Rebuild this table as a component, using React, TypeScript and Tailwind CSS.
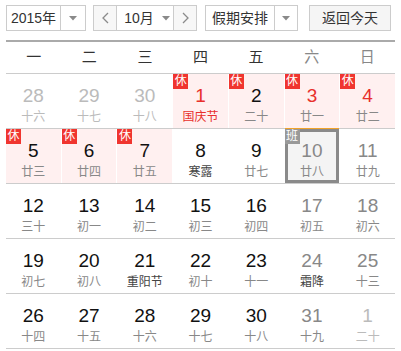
import React from "react";

type Day = {
  n: number;
  lunar: string;
  tone?: "prev" | "weekend" | "red" | "normal";
  lunarTone?: "red" | "dark" | "light" | "normal";
  rest?: boolean;
  work?: boolean;
  selected?: boolean;
};

const WEEK = ["一", "二", "三", "四", "五", "六", "日"];

const ROWS: Day[][] = [
  [
    { n: 28, lunar: "十六", tone: "prev", lunarTone: "light" },
    { n: 29, lunar: "十七", tone: "prev", lunarTone: "light" },
    { n: 30, lunar: "十八", tone: "prev", lunarTone: "light" },
    { n: 1, lunar: "国庆节", tone: "red", lunarTone: "red", rest: true },
    { n: 2, lunar: "二十", rest: true },
    { n: 3, lunar: "廿一", tone: "red", rest: true },
    { n: 4, lunar: "廿二", tone: "red", rest: true },
  ],
  [
    { n: 5, lunar: "廿三", rest: true },
    { n: 6, lunar: "廿四", rest: true },
    { n: 7, lunar: "廿五", rest: true },
    { n: 8, lunar: "寒露", lunarTone: "dark" },
    { n: 9, lunar: "廿七" },
    { n: 10, lunar: "廿八", tone: "weekend", work: true, selected: true },
    { n: 11, lunar: "廿九", tone: "weekend" },
  ],
  [
    { n: 12, lunar: "三十" },
    { n: 13, lunar: "初一" },
    { n: 14, lunar: "初二" },
    { n: 15, lunar: "初三" },
    { n: 16, lunar: "初四" },
    { n: 17, lunar: "初五", tone: "weekend" },
    { n: 18, lunar: "初六", tone: "weekend" },
  ],
  [
    { n: 19, lunar: "初七" },
    { n: 20, lunar: "初八" },
    { n: 21, lunar: "重阳节", lunarTone: "dark" },
    { n: 22, lunar: "初十" },
    { n: 23, lunar: "十一" },
    { n: 24, lunar: "霜降", tone: "weekend", lunarTone: "dark" },
    { n: 25, lunar: "十三", tone: "weekend" },
  ],
  [
    { n: 26, lunar: "十四" },
    { n: 27, lunar: "十五" },
    { n: 28, lunar: "十六" },
    { n: 29, lunar: "十七" },
    { n: 30, lunar: "十八" },
    { n: 31, lunar: "十九", tone: "weekend" },
    { n: 1, lunar: "二十", tone: "prev", lunarTone: "light" },
  ],
];

const numColor = {
  prev: "text-[#bbbbbb]",
  weekend: "text-[#888888]",
  red: "text-[#e8302c]",
  normal: "text-[#111111]",
};

const lunarColor = {
  red: "text-[#e8302c]",
  dark: "text-[#444444]",
  light: "text-[#bbbbbb]",
  normal: "text-[#888888]",
};

function Caret() {
  return (
    <svg width="8" height="5" viewBox="0 0 8 5">
      <path d="M0 0 L8 0 L4 4.5 Z" fill="#8a8a8a" />
    </svg>
  );
}

function Chevron({ dir }: { dir: "left" | "right" }) {
  return (
    <svg width="7" height="12" viewBox="0 0 7 12">
      <path
        d={dir === "left" ? "M6 1 L1 6 L6 11" : "M1 1 L6 6 L1 11"}
        fill="none"
        stroke="#8a8a8a"
        strokeWidth="1.3"
      />
    </svg>
  );
}

function Cell({ d }: { d: Day }) {
  return (
    <div
      className={`relative h-[54px] flex flex-col items-center ${
        d.rest ? "bg-[#fff0f0]" : ""
      }`}
    >
      {d.selected && (
        <div className="absolute inset-x-0 top-0 bottom-0 border-[3px] border-[#8a8a8a] bg-[#f4f4f4] shadow-[0_-1px_0_#f0a32a]" />
      )}
      {d.rest && (
        <span className="absolute left-0 top-0 w-[15px] h-[15px] bg-[#f0352f] text-white text-[12px] leading-[15px] text-center">
          休
        </span>
      )}
      {d.work && (
        <span className="absolute left-0 top-0 w-[15px] h-[15px] bg-[#999999] text-white text-[12px] leading-[15px] text-center z-10">
          班
        </span>
      )}
      <span
        className={`relative mt-[11px] text-[19px] leading-[22px] ${numColor[d.tone ?? "normal"]}`}
      >
        {d.n}
      </span>
      <span
        className={`relative mt-[2px] text-[12px] leading-[16px] ${lunarColor[d.lunarTone ?? "normal"]}`}
      >
        {d.lunar}
      </span>
    </div>
  );
}

export default function App() {
  return (
    <div
      className="w-[401px] h-[351px] bg-white overflow-hidden px-[6px] pt-[5px]"
      style={{ fontFamily: '"Liberation Sans", "Noto Sans CJK SC", sans-serif' }}
    >
      {/* toolbar */}
      <div className="flex items-center h-[26px] text-[14px] text-[#333333]">
        <div className="flex h-full w-[80px] border border-[#cccccc]">
          <div className="flex-1 flex items-center justify-center">2015年</div>
          <div className="w-[25px] border-l border-[#cccccc] flex items-center justify-center">
            <Caret />
          </div>
        </div>
        <div className="flex h-full w-[104px] ml-[7px] border border-[#cccccc]">
          <div className="w-[22px] bg-[#f7f7f7] flex items-center justify-center">
            <Chevron dir="left" />
          </div>
          <div className="flex-1 border-x border-[#cccccc] flex items-center justify-center gap-[8px] pl-[4px]">
            10月
            <Caret />
          </div>
          <div className="w-[22px] bg-[#f7f7f7] flex items-center justify-center">
            <Chevron dir="right" />
          </div>
        </div>
        <div className="flex h-full w-[93px] ml-[8px] border border-[#cccccc]">
          <div className="flex-1 flex items-center justify-center">假期安排</div>
          <div className="w-[23px] border-l border-[#cccccc] flex items-center justify-center">
            <Caret />
          </div>
        </div>
        <div className="h-full w-[82px] ml-[11px] border border-[#cccccc] bg-[#f5f5f5] flex items-center justify-center">
          返回今天
        </div>
      </div>

      {/* weekday header */}
      <div className="mt-[9px] border-t-2 border-[#aaaaaa] grid grid-cols-7 h-[34px] border-b border-b-[#cccccc]">
        {WEEK.map((w, i) => (
          <div
            key={w}
            className={`flex items-center justify-center text-[15px] ${
              i >= 5 ? "text-[#888888]" : "text-[#333333]"
            }`}
          >
            {w}
          </div>
        ))}
      </div>

      {/* days */}
      {ROWS.map((row, r) => (
        <div key={r} className="grid grid-cols-7 gap-x-px border-b border-[#cccccc]">
          {row.map((d, i) => (
            <Cell key={i} d={d} />
          ))}
        </div>
      ))}
    </div>
  );
}
